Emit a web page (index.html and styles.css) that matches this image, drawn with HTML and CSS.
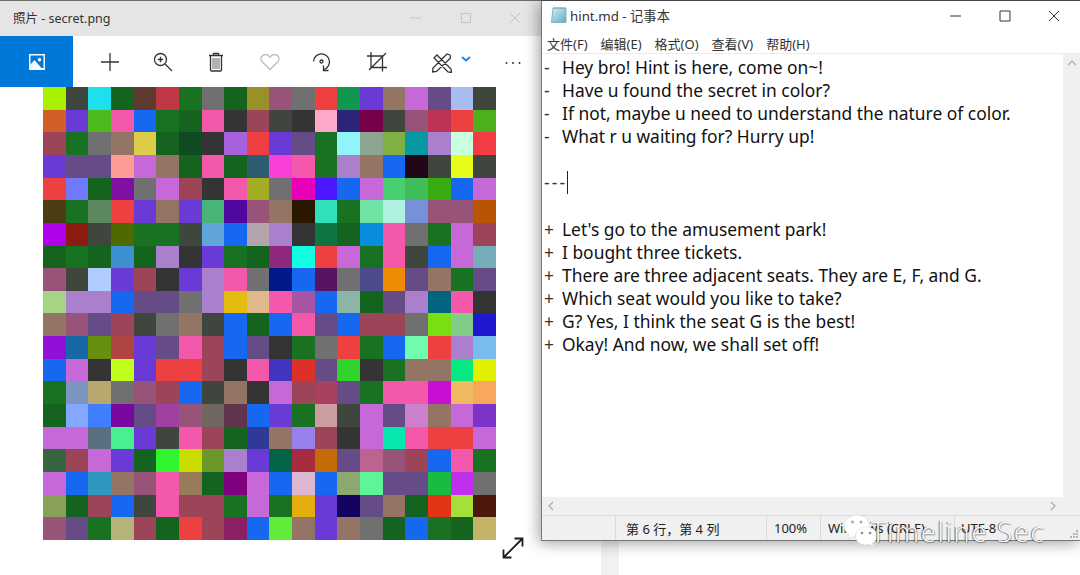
FILE: index.html
```html
<!DOCTYPE html>
<html lang="zh">
<head>
<meta charset="utf-8">
<title>secret.png / hint.md</title>
<link rel="stylesheet" href="styles.css">
</head>
<body>
<div class="desktop">
  <section class="photos">
    <header class="photos-title">
      <span class="photos-name">照片 - secret.png</span>
      <span class="controls controls-faint">
        <svg viewBox="0 0 12 12"><path d="M0 6h11"/></svg>
        <svg viewBox="0 0 12 12"><path d="M1.500 1.500h9v9h-9z"/></svg>
        <svg viewBox="0 0 12 12"><path d="M1 1l10 10M11 1L1 11"/></svg>
      </span>
    </header>
    <nav class="toolbar">
      <div class="tool-home">
        <svg width="18" height="18" viewBox="0 0 18 18"><path class="ico-white" fill-rule="evenodd" d="M1 1h16v16H1zM2.500 2.500v9l4-4.500 7 8h2v-12.500zM11.500 5a1.700 1.700 0 1 0 .01 0z"/></svg>
      </div>
      <svg class="tool t-plus" width="20" height="20" viewBox="0 0 20 20"><path class="ico" d="M10 1v18M1 10h18"/></svg>
      <svg class="tool t-zoom" width="20" height="20" viewBox="0 0 20 20"><circle class="ico" cx="7.500" cy="7.500" r="6"/><path class="ico" d="M12 12l7 7M4.800 7.500h5.400M7.500 4.800v5.400"/></svg>
      <svg class="tool t-trash" width="16" height="20" viewBox="0 0 16 20"><path class="ico" d="M2.500 4v14q0 1 1 1h9q1 0 1-1V4M1 3.500h14M5.500 3.500V1.500h5v2"/><path class="ico-thin" d="M5 6v11M7 6v11M9 6v11M11 6v11"/></svg>
      <svg class="tool t-heart" width="20" height="18" viewBox="0 0 20 18"><path class="ico-light" d="M10 16.500L2 8.500C-.5 5 2 1.500 5.500 1.500 7.500 1.500 9 2.700 10 4.200 11 2.700 12.500 1.500 14.500 1.500 18 1.500 20.500 5 18 8.500z"/></svg>
      <svg class="tool t-rotate" width="20" height="20" viewBox="0 0 20 20"><path class="ico" d="M1.500 9.500A8 8 0 1 1 12 17.500"/><path class="ico" d="M11.500 13.500v5h5"/><circle class="ico" cx="9.500" cy="9.500" r="1.500"/></svg>
      <svg class="tool t-crop" width="20" height="20" viewBox="0 0 20 20"><path class="ico" d="M0 4h15.500v15.500M4 0v15.500h16M2 18L19 1"/></svg>
      <svg class="tool t-draw" width="20" height="20" viewBox="0 0 20 20"><path class="ico" d="M2 5l3-3 14 14 .5 3.500-3.500-.5zM18 2l-3-1-14 14-.5 4 4-.5L18.500 5z"/></svg>
      <svg class="tool t-chev" width="10" height="6" viewBox="0 0 10 6"><path class="ico-blue" d="M1 1l4 3.500L9 1"/></svg>
      <svg class="tool t-more" width="16" height="4" viewBox="0 0 16 4"><circle cx="1.500" cy="2" r="1"/><circle cx="8" cy="2" r="1"/><circle cx="14.500" cy="2" r="1"/></svg>
    </nav>
    <div class="stage"><div class="mosaic" id="mosaic"></div></div>
    <footer class="photos-foot">
      <svg width="22" height="22" viewBox="0 0 22 22"><path class="ico-dark" d="M1.500 20.500L20.500 1.500M12.500 1.500h8v8M1.500 12.500v8h8"/></svg>
    </footer>
  </section>

  <div class="right-col">
    <section class="notepad">
      <header class="np-title">
        <svg class="np-icon" width="17" height="17" viewBox="0 0 17 17"><defs><linearGradient id="npg" x1="0" y1="0" x2="1" y2="1"><stop offset="0" stop-color="#d8eef6"/><stop offset="1" stop-color="#5fa9c4"/></linearGradient></defs><path d="M3 1h13v14.500H1.500z" fill="url(#npg)" stroke="#7fb0c4"/><path d="M4 1h11" stroke="#5a8aa0" stroke-dasharray="1 1"/></svg>
        <span class="np-name">hint.md - 记事本</span>
        <span class="controls controls-dark">
          <svg viewBox="0 0 12 12"><path d="M0 6h11"/></svg>
          <svg viewBox="0 0 12 12"><path d="M1 1h10v10H1z"/></svg>
          <svg viewBox="0 0 12 12"><path d="M1 1l10 10M11 1L1 11"/></svg>
        </span>
      </header>
      <div class="menu">
        <span>文件(F)</span><span>编辑(E)</span><span>格式(O)</span><span>查看(V)</span><span>帮助(H)</span>
      </div>
      <div class="editor">
        <pre class="text"><span class="mark">-</span>Hey bro! Hint is here, come on~!
<span class="mark">-</span>Have u found the secret in color?
<span class="mark">-</span>If not, maybe u need to understand the nature of color.
<span class="mark">-</span>What r u waiting for? Hurry up!

<span class="rule">---</span><span class="caret"></span>

<span class="mark">+</span>Let's go to the amusement park!
<span class="mark">+</span>I bought three tickets.
<span class="mark">+</span>There are three adjacent seats. They are E, F, and G.
<span class="mark">+</span>Which seat would you like to take?
<span class="mark">+</span>G? Yes, I think the seat G is the best!
<span class="mark">+</span>Okay! And now, we shall set off!</pre>
        <div class="vbar"><svg width="10" height="6" viewBox="0 0 10 6"><path d="M1 5l4-4 4 4"/></svg><svg width="10" height="6" viewBox="0 0 10 6"><path d="M1 1l4 4 4-4"/></svg></div>
      </div>
      <div class="hbar">
        <svg width="6" height="10" viewBox="0 0 6 10"><path d="M5 1L1 5l4 4"/></svg>
        <svg width="6" height="10" viewBox="0 0 6 10"><path d="M1 1l4 4-4 4"/></svg>
      </div>
      <footer class="status">
        <span class="s-blank"></span>
        <span class="s-pos">第 6 行，第 4 列</span>
        <span class="s-zoom">100%</span>
        <span class="s-os">Windows (CRLF)</span>
        <span class="s-enc">UTF-8</span>
        <svg class="grip" width="10" height="10" viewBox="0 0 10 10"><path d="M7 1h2v2H7zM4 4h2v2H4zM7 4h2v2H7zM1 7h2v2H1zM4 7h2v2H4zM7 7h2v2H7z"/></svg>
      </footer>
    </section>
    <div class="below"><span class="stripe"></span></div>
  </div>

  <div class="watermark">
    <svg width="36" height="34" viewBox="0 0 36 34"><path class="bub" d="M14 1C6.500 1 1 6 1 12c0 3.500 2 6.500 5 8.500L5 25l5-2.500c1.500.4 3 .6 4.500.6 6.500 0 12-5 12-11S21 1 14 1z"/><path class="bub" d="M23 13c-6 0-10.500 4-10.500 9s4.500 9 10.500 9c1.200 0 2.400-.2 3.500-.5l4 2-1-3.500c2.700-1.700 4.500-4.200 4.500-7 0-5-4.500-9-11-9z"/><circle cx="9.500" cy="8" r="1.500" fill="#aaa"/><circle cx="18" cy="8" r="1.500" fill="#aaa"/><circle cx="19" cy="19" r="1.300" fill="#888"/><circle cx="27" cy="19" r="1.300" fill="#888"/></svg>
    <span class="wm-text">Timeline Sec</span>
  </div>
</div>
<script src="script.js"></script>
</body>
</html>
```
FILE: styles.css
```css
* { box-sizing: border-box; }
html, body { margin: 0; padding: 0; }
body { width: 1080px; height: 575px; overflow: hidden; background: #fff; font-family: "Noto Sans", "Noto Sans CJK SC", sans-serif; color: #222; }

.desktop { position: relative; display: flex; width: 1080px; height: 575px; overflow: hidden; }

/* Photos window */
.photos { width: 541px; height: 575px; display: flex; flex-direction: column; background: #fff; flex: none; }
.photos-title { height: 36px; flex: none; display: flex; align-items: center; justify-content: space-between; padding: 0 0 2px 13px; background: #e5e5e5; border-top: 1px solid #6e6e6e; }
.photos-name { font-size: 12.500px; color: #333; }

.controls { display: flex; align-items: center; }
.controls svg { width: 12px; height: 12px; fill: none; stroke-width: 1; }
.controls-faint { gap: 37.500px; padding-right: 20px; }
.controls-faint svg { stroke: #c6c6c6; }
.controls-dark { gap: 37px; padding-right: 20.500px; }
.controls-dark svg { stroke: #333; }

.toolbar { position: relative; height: 51px; flex: none; display: flex; align-items: center; background: #fff; }
.tool-home { width: 73px; height: 51px; background: #0078d7; display: flex; align-items: center; justify-content: center; flex: none; }
.tool { flex: none; margin-top: 1px; }
.t-plus { margin-left: 27px; }
.t-zoom { margin-left: 33px; }
.t-trash { margin-left: 35px; }
.t-heart { margin-left: 36px; }
.t-rotate { margin-left: 32px; }
.t-crop { margin-left: 35px; }
.t-draw { margin-left: 45px; margin-top: 3px; }
.t-chev { margin-left: 9px; margin-top: -5px; }
.t-more { margin-left: 34px; fill: #333; margin-top: 2px; }

.ico, .ico-light, .ico-thin, .ico-dark, .ico-blue { fill: none; }
.ico { stroke: #333; stroke-width: 1.300; }
.ico-thin { stroke: #666; stroke-width: 1; }
.ico-light { stroke: #bdbdbd; stroke-width: 1.300; }
.ico-dark { stroke: #1c1c1c; stroke-width: 1.800; }
.ico-blue { stroke: #1e88e5; stroke-width: 2; }
.ico-white { fill: #f4faff; }

.stage { flex: none; display: flex; justify-content: center; padding-right: 2px; }
.mosaic { width: 453px; height: 453px; display: grid; grid-template-columns: repeat(20, 1fr); grid-template-rows: repeat(20, 1fr); }
.photos-foot { flex: 1; display: flex; justify-content: flex-end; padding: 0 17px 0 0; align-items: flex-start; margin-top: -3px; }

/* Notepad window */
.right-col { flex: 1; display: flex; flex-direction: column; position: relative; min-width: 0; }
.notepad { position: relative; z-index: 1; height: 541px; flex: none; display: flex; flex-direction: column; background: #fff; border-top: 1px solid #444; border-left: 1px solid #777; border-bottom: 1px solid #777; box-shadow: -2px 2px 14px rgba(0, 0, 0, .38); }
.np-title { height: 32px; flex: none; display: flex; align-items: center; padding: 0 0 3px 8px; background: #fff; }
.np-icon { flex: none; margin-right: 3px; }
.np-name { font-size: 13.300px; color: #333; flex: 1; }
.menu { height: 21px; flex: none; display: flex; gap: 13px; padding-left: 5px; align-items: center; font-size: 13px; color: #333; border-bottom: 1px solid #ececec; }
.editor { flex: 1; display: flex; min-height: 0; }
.text { flex: 1; margin: 0; padding: 2px 0 0 2px; font-family: "Noto Sans", sans-serif; font-size: 17.400px; line-height: 23.100px; color: #111; background: #fff; overflow: hidden; }
.mark { display: inline-block; width: 18px; color: #333; }
.rule { letter-spacing: 2.100px; color: #333; }
.caret { display: inline-block; width: 0; height: 23px; border-left: 1px solid #222; vertical-align: top; }
.vbar { width: 17px; flex: none; background: #f0f0f0; display: flex; flex-direction: column; justify-content: space-between; align-items: center; padding: 6px 0; }
.vbar svg, .hbar svg { fill: none; stroke: #aaa; stroke-width: 1.200; }
.vbar svg:last-child { visibility: hidden; }
.hbar { height: 18px; flex: none; background: #f0f0f0; display: flex; justify-content: space-between; align-items: center; padding: 0 24px 0 6px; }
.status { height: 25px; flex: none; display: flex; align-items: center; position: relative; background: #f0f0f0; border-top: 1px solid #dcdcdc; font-size: 13px; color: #222; }
.status span { height: 100%; display: flex; align-items: center; border-right: 1px solid #d9d9d9; }
.s-blank { width: 74px; }
.s-pos { width: 151px; padding-left: 10px; }
.s-zoom { width: 54px; padding-left: 7px; }
.s-os { width: 134px; padding-left: 7px; }
.s-enc { padding-left: 6px; width: 90px; border-right: 0 !important; }
.grip { position: absolute; right: 1px; bottom: 1px; fill: #b4b4b4; }
.below { flex: 1; background: #fff; padding-left: 60px; }
.stripe { display: block; width: 18px; height: 100%; background: #f1f1f1; }

/* Watermark */
.watermark { position: absolute; z-index: 2; left: 843px; top: 513px; display: flex; align-items: center; gap: 0; color: #fff; }
.bub { fill: #fff; stroke: #d6d6d6; stroke-width: .6; }
.wm-text { font-family: "Open Sans", sans-serif; font-weight: 300; font-size: 27px; line-height: 34px; letter-spacing: 1.900px; margin-top: 2px; margin-left: -8px; text-shadow: -1px 0 1px rgba(0, 0, 0, .55), 1px 1px 1px rgba(0, 0, 0, .35); }
```
FILE: script.js
```js
var rows = [
"a8f000 3e463e 1ee0ec 146420 5e3a30 c03844 187222 707070 146420 9a9028 985478 707070 ee4040 109850 6a3ad6 947464 c668d8 664c86 a8bcf0 3e463e",
"d06028 6a3ad6 4cba1c f458aa 1668f0 187222 146420 f458aa 343434 9c4458 3e463e 343434 ffa8cc 2c2478 780048 3e463e 985478 bc3454 ee4040 4cb01c",
"9c4458 187222 707070 947464 dccc48 146420 104a20 343434 a660dc ee4040 6a3ad6 664c86 187222 90f4f8 8ca490 80b044 0898a4 aa80cc c8ffdc f43c44",
"6a3ad6 664c86 664c86 fc9c94 c668d8 947464 146420 f458aa 146420 2e5c70 f840d8 f458aa 187222 aa80cc 947464 1668f0 200818 3e463e e8fc1c 3e463e",
"ee4040 7078fc 146420 8010a4 707070 c668d8 9c4458 343434 f458aa a4ac24 707070 e800b8 4c18ff 1668f0 c668d8 48d070 40bc58 38ac10 1668f0 c668d8",
"4c3c14 187222 5c8860 ee4040 6a3ad6 947464 6a3ad6 48b478 5008a0 985478 947464 281800 30e0b8 187222 70e4a4 b0f0e0 7890d8 985478 985478 b85404",
"b000ec 8c1c10 3e463e 506800 187222 187222 3e463e 60a4dc 1668f0 b4a4ac aa80cc 343434 0e7440 146420 088cdc f458aa 707070 187222 c668d8 9c4458",
"146420 187222 146420 3c90d0 146420 aa80cc 343434 6a3ad6 187222 146420 90287c 10ffe0 ee4040 c668d8 187222 f458aa 3e463e 1668f0 c668d8 78acb8",
"985478 3e463e b0ccff 6a3ad6 9c4458 343434 6a3ad6 aa80cc f458aa 707070 001888 1668f0 581460 707070 4c4c8c ec8c04 664c86 947464 187222 664c86",
"a4d484 aa80cc aa80cc 1668f0 664c86 664c86 707070 aa80cc e4bc10 e0b88c f458aa a854a4 1668f0 8cb4a8 146420 664c86 aa80cc 046480 f458aa 343434",
"947464 985478 664c86 9c4458 3e463e 707070 947464 3e463e 1668f0 146420 1668f0 f458aa 664c86 1668f0 9c4458 9c4458 707070 78e010 80cc88 2018d0",
"9010d8 1868a8 689010 b04440 6a3ad6 664c86 f458aa 9c4458 1668f0 664c86 343434 187222 707070 ee4040 187222 1668f0 70fcac ee4040 aa80cc 78bcf0",
"1668f0 c668d8 343434 c0ff1c 6a3ad6 ee4040 ee4040 9c4458 343434 f458aa 4034c0 dc3028 664c86 30d428 343434 187222 947464 947464 08e880 e0f000",
"187222 7c94c0 b8a870 707070 985478 9c4458 1668f0 3e463e 947464 343434 c668d8 9c4458 a84060 664c86 187222 f458aa f458aa c810d4 f0b860 f8a85c",
"146420 84a8ff 4080ff 7808a0 664c86 a040a0 985478 706860 60344c 1668f0 6a3ad6 187222 cc9ca0 3e463e c668d8 664c86 cc80cc 947464 c668d8 7c34c8",
"c668d8 c668d8 587080 48f090 6a3ad6 3e463e f458aa 9c4458 146420 303898 947464 9880ec 9c4458 343434 c668d8 04e8ac f458aa ee4040 ee4040 c668d8",
"386440 9c4458 c668d8 6a3ad6 146420 30f430 c8dc00 6c9828 aa80cc 6a3ad6 046448 a82c40 c46c08 664c86 bc6490 985478 9c4458 1668f0 f458aa 187222",
"c668d8 1668f0 3098c0 947464 985478 f458aa 987c58 146420 800080 c668d8 1668f0 dcb8d0 1668f0 8ca870 60f498 664c86 664c86 18bc40 c030ec 707070",
"88a058 146420 9c4458 1668f0 3e463e f458aa 9c4458 9c4458 187222 c668d8 187222 e4ac0c 6a3ad6 140460 664c86 947464 146420 e43418 a4e038 4c180c",
"985478 664c86 187222 b4b478 9c4458 146420 ee4040 9c4458 8c2064 1668f0 60ec38 947464 6a3ad6 947464 707070 146420 1668f0 187222 146420 c4b468"
];
var host = document.getElementById("mosaic");
rows.join(" ").split(" ").forEach(function (c) {
  var cell = document.createElement("div");
  cell.style.background = "#" + c;
  host.appendChild(cell);
});
```
